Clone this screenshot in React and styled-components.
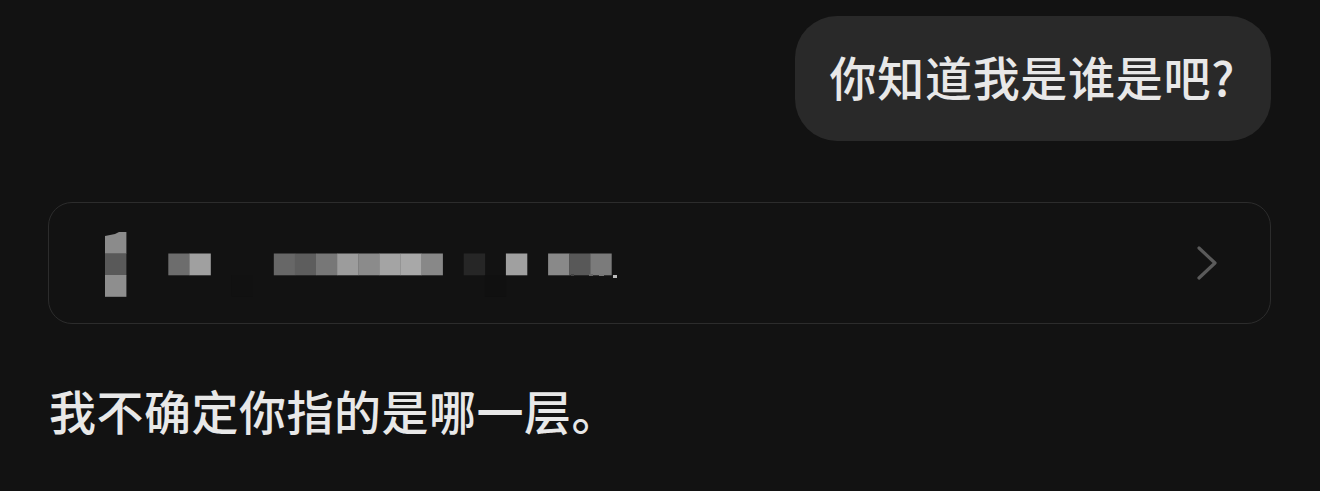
import React from 'react'
import styled, { createGlobalStyle } from 'styled-components'

const GlobalStyle = createGlobalStyle`
  html, body {
    margin: 0;
    padding: 0;
    background: #121212;
  }
  body {
    font-family: "Noto Sans CJK SC", "Noto Sans", sans-serif;
    color: #e8e8e8;
  }
`

const Page = styled.div`
  width: 1320px;
  height: 491px;
  box-sizing: border-box;
  padding: 16px 49px 0 48px;
  display: flex;
  flex-direction: column;
  background: #121212;
  overflow: hidden;
`

const UserBubble = styled.div`
  align-self: flex-end;
  height: 125px;
  box-sizing: border-box;
  padding: 0 36px 7px 35px;
  display: flex;
  align-items: center;
  background: #292929;
  border-radius: 42px;
  font-size: 47px;
  font-weight: 500;
  letter-spacing: 0.7px;
  line-height: 1;
`

const SourceCard = styled.div`
  margin-top: 61px;
  height: 122px;
  box-sizing: border-box;
  border: 1.5px solid #2c2c2c;
  border-radius: 24px;
  display: flex;
  align-items: center;
  justify-content: space-between;
  padding: 0 52px 0 56px;
`

const Mosaic = styled.svg`
  display: block;
  margin-top: 3px;
`

const Chevron = styled.svg`
  display: block;
`

const Reply = styled.p`
  margin: 56px 0 0 1px;
  font-size: 47px;
  font-weight: 500;
  letter-spacing: 0.5px;
  line-height: 60px;
`

const CELL = 21.1

// mosaic cells: [column, row, colour]
const cells = [
  [0, 0, '#8b8b8b'], [0, 1, '#595959'], [0, 2, '#8e8e8e'],
  [3, 1, '#6d6d6d'], [4, 1, '#a0a0a0'],
  [6, 2, '#111111'],
  [8, 1, '#676767'], [9, 1, '#5d5d5d'], [10, 1, '#777777'], [11, 1, '#9c9c9c'],
  [12, 1, '#8b8b8b'], [13, 1, '#a4a4a4'], [14, 1, '#a8a8a8'], [15, 1, '#888888'],
  [17, 1, '#262626'], [18, 2, '#101010'], [19, 1, '#a0a0a0'],
  [21, 1, '#898989'], [22, 1, '#585858'], [23, 1, '#7b7b7b'],
]

function App() {
  return (
    <>
      <GlobalStyle />
      <Page>
        <UserBubble>你知道我是谁是吧?</UserBubble>
        <SourceCard>
          <Mosaic width="520" height="66" viewBox="0 0 520 66">
            {cells.map(([c, r, fill]) => (
              <rect
                key={`${c}-${r}`}
                x={c * CELL}
                y={r * 21.5}
                width={CELL + 0.3}
                height={21.8}
                fill={fill}
              />
            ))}
            <polygon points="0,4 10,2 14,0 0,0" fill="#121212" />
            <rect x="466" y="42" width="3" height="2" fill="#444" />
            <rect x="484" y="42" width="4" height="2" fill="#666" />
            <rect x="494" y="42" width="5" height="2" fill="#777" />
            <rect x="508" y="43" width="4" height="3" fill="#bbbbbb" />
          </Mosaic>
          <Chevron width="22" height="36" viewBox="0 0 22 36">
            <polyline
              points="3,3 19,18 3,33"
              fill="none"
              stroke="#5a5a5a"
              strokeWidth="3.2"
              strokeLinecap="round"
              strokeLinejoin="round"
            />
          </Chevron>
        </SourceCard>
        <Reply>我不确定你指的是哪一层。</Reply>
      </Page>
    </>
  )
}

export default App
